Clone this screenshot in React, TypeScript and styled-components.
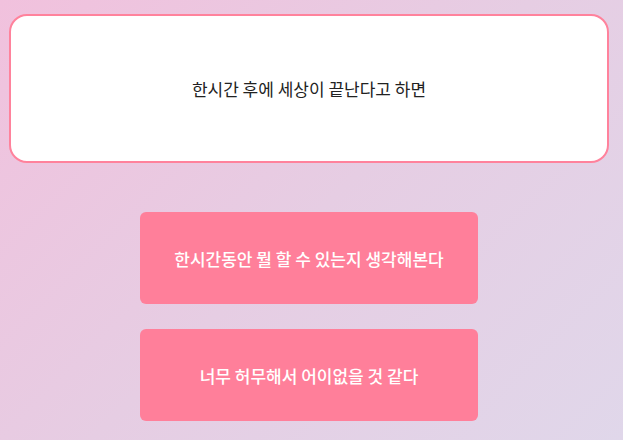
import React from "react";
import styled, { createGlobalStyle } from "styled-components";

const Global = createGlobalStyle`
  html, body {
    margin: 0;
    padding: 0;
    height: 100%;
  }
  body {
    background: linear-gradient(135deg, #f1c1dd 0%, #e6cde3 50%, #e0d7ea 100%);
    font-family: "Noto Sans CJK KR", "Noto Sans", sans-serif;
  }
  #root { min-height: 100vh; }
`;

const Page = styled.div`
  width: 600px;
  padding: 14px 0 0 9px;
  display: flex;
  flex-direction: column;
  align-items: center;
`;

const QuestionCard = styled.div`
  box-sizing: border-box;
  width: 600px;
  height: 149px;
  background: #ffffff;
  border: 2px solid #ff829c;
  border-radius: 18px;
  display: flex;
  align-items: center;
  justify-content: center;
  color: #222222;
  font-size: 17px;
  font-weight: 400;
`;

const Choices = styled.div`
  margin-top: 49px;
  display: flex;
  flex-direction: column;
  gap: 25px;
`;

const ChoiceButton = styled.button`
  box-sizing: border-box;
  width: 338px;
  height: 92px;
  border: none;
  border-radius: 6px;
  background: #ff7f9a;
  color: #ffffff;
  font-family: "Noto Sans CJK KR", "Noto Sans", sans-serif;
  font-size: 17px;
  font-weight: 500;
  cursor: pointer;
  padding: 0;
`;

export default function App() {
  return (
    <>
      <Global />
      <Page>
        <QuestionCard>한시간 후에 세상이 끝난다고 하면</QuestionCard>
        <Choices>
          <ChoiceButton>한시간동안 뭘 할 수 있는지 생각해본다</ChoiceButton>
          <ChoiceButton>너무 허무해서 어이없을 것 같다</ChoiceButton>
        </Choices>
      </Page>
    </>
  );
}
